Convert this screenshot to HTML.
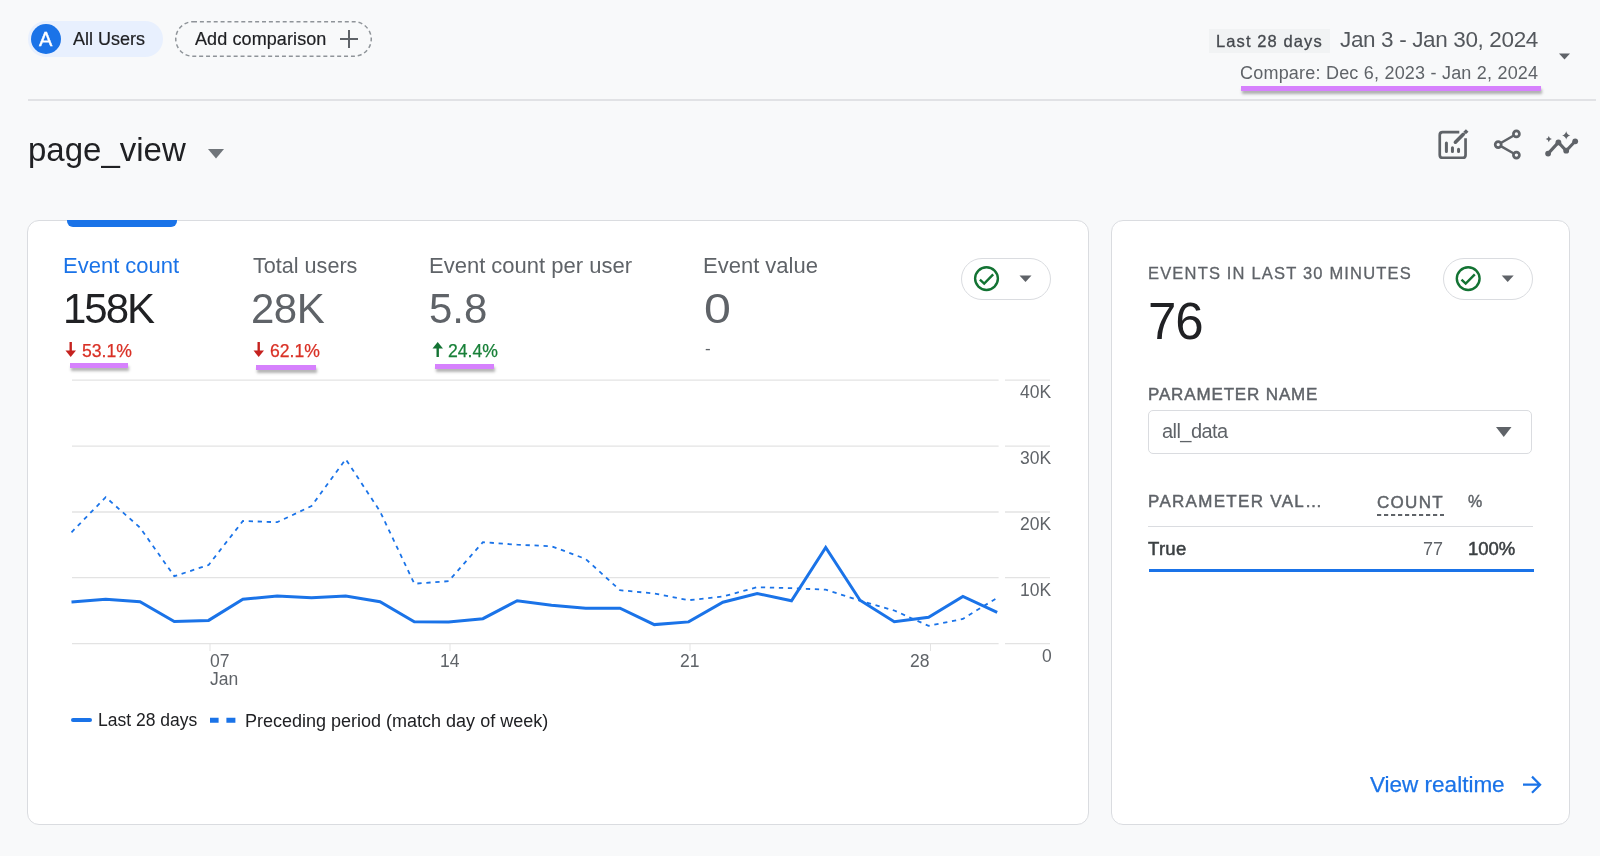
<!DOCTYPE html>
<html><head><meta charset="utf-8">
<style>
html,body{margin:0;padding:0;}
body{width:1600px;height:856px;background:#f8f9fa;position:relative;overflow:hidden;font-family:"Liberation Sans",sans-serif;color:#202124;}
.a{position:absolute;white-space:nowrap;line-height:1;will-change:transform;}
.card{position:absolute;background:#fff;border:1px solid #dadce0;border-radius:12px;box-sizing:border-box;}
.pu{position:absolute;background:#d681fd;height:5px;box-shadow:1px 3px 3px rgba(0,0,0,0.3);}
.g{color:#5f6368;}
</style></head><body>

<!-- top chips -->
<div style="position:absolute;left:28px;top:21px;width:135px;height:36px;border-radius:18px;background:#e8f0fe;"></div>
<div style="position:absolute;left:31px;top:24px;width:30px;height:30px;border-radius:15px;background:#1a73e8;"></div>
<div class="a" style="left:38.5px;top:28.5px;font-size:20px;-webkit-text-stroke:0.4px #fff;color:#fff;">A</div>
<div class="a" style="left:73px;top:29.8px;font-size:18px;-webkit-text-stroke:0.2px #202124;color:#202124;">All Users</div>

<svg style="position:absolute;left:174px;top:20px" width="200" height="40"><rect x="1.75" y="1.75" width="195.5" height="34.5" rx="17.25" fill="none" stroke="#8f9499" stroke-width="1.5" stroke-dasharray="4 2.9"/></svg>
<div class="a" style="left:195px;top:30px;font-size:18px;letter-spacing:0.1px;-webkit-text-stroke:0.2px #202124;color:#202124;">Add comparison</div>
<div style="position:absolute;left:340px;top:38px;width:18px;height:2px;background:#5f6368;"></div>
<div style="position:absolute;left:348px;top:30px;width:2px;height:18px;background:#5f6368;"></div>

<!-- date range -->
<div style="position:absolute;left:1209px;top:29px;width:121px;height:24px;background:#f1f3f4;"></div>
<div class="a" style="left:1216px;top:32.5px;font-size:16.5px;letter-spacing:1.1px;-webkit-text-stroke:0.3px #45494e;color:#45494e;">Last 28 days</div>
<div class="a" style="left:1339.5px;top:29.2px;font-size:22.5px;letter-spacing:-0.36px;color:#54585d;">Jan 3 - Jan 30, 2024</div>
<div class="a" style="left:1240px;top:63.5px;font-size:18px;letter-spacing:0.21px;color:#5f6368;">Compare: Dec 6, 2023 - Jan 2, 2024</div>
<div class="pu" style="left:1241px;top:86px;width:300px;height:4.5px;"></div>
<svg style="position:absolute;left:1559px;top:53px" width="12" height="7"><path d="M0 0.5 L11 0.5 L5.5 6.5Z" fill="#5f6368"/></svg>
<div style="position:absolute;left:28px;top:99px;width:1568px;height:2px;background:#e1e2e5;"></div>

<!-- title -->
<div class="a" style="left:28px;top:133px;font-size:33px;color:#202124;">page_view</div>
<svg style="position:absolute;left:208px;top:149px" width="17" height="10"><path d="M0 0 L16 0 L8 9.5Z" fill="#70757a"/></svg>

<!-- icons -->
<svg style="position:absolute;left:1430px;top:120px" width="160" height="50" fill="none" stroke="#5f6368">
  <path d="M29.3 12.15 H12.6 Q9.75 12.15 9.75 15 V34.9 Q9.75 37.75 12.6 37.75 H32.7 Q35.55 37.75 35.55 34.9 V18.2" stroke-width="2.7"/>
  <path d="M16.4 23.1 V31.6 M22.45 27.7 V31.6 M28.55 29.3 V31.6" stroke-width="3" stroke-linecap="round"/>
  <path d="M25.4 22.2 L33.3 14.3" stroke-width="3.6" stroke-linecap="round"/>
  <path d="M34.6 13 L37.2 10.4" stroke-width="3.6"/>
  <circle cx="86.4" cy="13.9" r="3" stroke-width="2.7"/>
  <circle cx="68.2" cy="24.6" r="3" stroke-width="2.7"/>
  <circle cx="86.4" cy="35.1" r="3" stroke-width="2.7"/>
  <path d="M70.8 23 L83.8 15.5 M70.8 26.2 L83.8 33.5" stroke-width="2.5"/>
  <path d="M118.1 33.6 L128.4 22.4 L136.2 30.7 L145.2 21.3" stroke-width="3.1"/>
  <g fill="#5f6368" stroke="none">
    <circle cx="118.1" cy="33.6" r="2.9"/><circle cx="128.4" cy="22.4" r="2.9"/><circle cx="136.2" cy="30.7" r="2.9"/><circle cx="145.2" cy="21.3" r="2.9"/>
    <path d="M136.2 11.2 Q136.9 14.7 140.3 15.4 Q136.9 16.1 136.2 19.6 Q135.5 16.1 132.1 15.4 Q135.5 14.7 136.2 11.2Z"/>
    <path d="M118.8 16 Q119.3 18.6 121.9 19.1 Q119.3 19.6 118.8 22.2 Q118.3 19.6 115.7 19.1 Q118.3 18.6 118.8 16Z"/>
  </g>
</svg>

<!-- left card -->
<div class="card" style="left:27px;top:220px;width:1062px;height:605px;"></div>
<div style="position:absolute;left:67px;top:220px;width:110px;height:7px;background:#1a73e8;border-radius:0 0 6px 6px;"></div>

<div class="a" style="left:63px;top:254.5px;font-size:22px;color:#1a73e8;">Event count</div>
<div class="a" style="left:253px;top:254.8px;font-size:21.6px;color:#5f6368;">Total users</div>
<div class="a" style="left:429px;top:254.5px;font-size:22px;color:#5f6368;">Event count per user</div>
<div class="a" style="left:703px;top:254.5px;font-size:22px;color:#5f6368;">Event value</div>

<div class="a" style="left:63px;top:287.5px;font-size:42px;letter-spacing:-2px;color:#202124;">158K</div>
<div class="a" style="left:251px;top:287.5px;font-size:42px;letter-spacing:-0.5px;color:#5f6368;">28K</div>
<div class="a" style="left:429px;top:287.5px;font-size:42px;color:#5f6368;">5.8</div>
<div class="a" style="left:704px;top:287.5px;font-size:42px;color:#5f6368;transform:scaleX(1.15);transform-origin:0 0;">0</div>
<div class="a" style="left:704.5px;top:339.5px;font-size:17px;color:#5f6368;">-</div>

<div class="a" style="left:82px;top:342.8px;font-size:17.6px;letter-spacing:0px;-webkit-text-stroke:0.25px #d93025;color:#d93025;">53.1%</div>
<div class="a" style="left:270px;top:342.8px;font-size:17.6px;letter-spacing:0px;-webkit-text-stroke:0.25px #d93025;color:#d93025;">62.1%</div>
<div class="a" style="left:448px;top:342.8px;font-size:17.6px;letter-spacing:0px;-webkit-text-stroke:0.25px #188038;color:#188038;">24.4%</div>
<svg style="position:absolute;left:0;top:0" width="600" height="400">
  <path d="M70.7 342 V354" stroke="#c5221f" stroke-width="2.4"/><path d="M65.5 350.5 L70.7 357 L76 350.5Z" fill="#c5221f"/>
  <path d="M258.7 342 V354" stroke="#c5221f" stroke-width="2.4"/><path d="M253.5 350.5 L258.7 357 L264 350.5Z" fill="#c5221f"/>
  <path d="M437.7 345 V357" stroke="#137333" stroke-width="2.4"/><path d="M432.5 348.5 L437.7 342 L443 348.5Z" fill="#137333"/>
</svg>
<div class="pu" style="left:70px;top:363px;width:58px;"></div>
<div class="pu" style="left:256px;top:364.5px;width:60px;"></div>
<div class="pu" style="left:435px;top:364px;width:59px;"></div>

<!-- status chip left -->
<div style="position:absolute;left:961px;top:257.5px;width:90px;height:42px;border-radius:21px;border:1px solid #dadce0;box-sizing:border-box;"></div>
<svg style="position:absolute;left:961px;top:257px" width="90" height="43">
  <circle cx="25.5" cy="21.6" r="11.4" fill="none" stroke="#137333" stroke-width="2.4"/>
  <path d="M18.9 22.6 L23.2 26.6 L32.2 17.3" fill="none" stroke="#137333" stroke-width="2.4"/>
  <path d="M58.5 18.5 L70.5 18.5 L64.5 25Z" fill="#5f6368"/>
</svg>

<!-- chart -->
<svg style="position:absolute;left:0;top:0" width="1600" height="856">
  <g stroke="#e3e3e3" stroke-width="1.3">
    <path d="M72 380.2 H998.6 M1005 380.2 H1050"/>
    <path d="M72 446.1 H998.6 M1005 446.1 H1050"/>
    <path d="M72 512 H998.6 M1005 512 H1050"/>
    <path d="M72 577.7 H998.6 M1005 577.7 H1050"/>
    <path d="M72 643.7 H998.6 M1005 643.7 H1050"/>
    <path d="M210 644 V651 M450 644 V651 M690 644 V651 M930.5 644 V651" stroke-width="1"/>
  </g>
  <polyline fill="none" stroke="#1a73e8" stroke-width="1.8" stroke-dasharray="4.3 4.7" points="71.5,532.3 105.7,497.2 140.0,527.6 174.3,576.2 208.6,565.0 242.9,521.0 277.2,522.2 311.5,506.1 345.7,459.2 380.0,511.3 414.3,583.7 448.6,581.2 482.9,542.2 517.2,544.7 551.5,546.2 585.7,559.0 620.0,590.2 654.3,593.5 688.6,600.2 722.9,596.5 757.2,587.2 791.5,588.2 825.7,589.7 860.0,600.6 894.3,610.5 928.6,625.9 962.9,618.9 997.2,597.8"/>
  <polyline fill="none" stroke="#1a73e8" stroke-width="3" stroke-linejoin="miter" points="71.5,601.9 105.7,599.3 140.0,601.7 174.3,621.5 208.6,620.4 242.9,599.3 277.2,596.1 311.5,597.7 345.7,596.1 380.0,601.7 414.3,621.8 448.6,621.9 482.9,618.7 517.2,600.7 551.5,605.2 585.7,608.2 620.0,608.2 654.3,624.6 688.6,621.9 722.9,602.2 757.2,593.5 791.5,600.7 825.7,547.5 860.0,600.2 894.3,621.7 928.6,617.2 962.9,596.4 997.2,612.3"/>
  <path d="M73 720 H90" stroke="#1a73e8" stroke-width="4" stroke-linecap="round"/>
  <path d="M210 720.2 H218.6 M226.4 720.2 H235.4" stroke="#1a73e8" stroke-width="5"/>
</svg>
<div class="a g" style="right:548.5px;top:384px;font-size:17.5px;">40K</div>
<div class="a g" style="right:548.5px;top:450px;font-size:17.5px;">30K</div>
<div class="a g" style="right:548.5px;top:516px;font-size:17.5px;">20K</div>
<div class="a g" style="right:548.5px;top:582px;font-size:17.5px;">10K</div>
<div class="a g" style="right:548.5px;top:648px;font-size:17.5px;">0</div>
<div class="a g" style="left:210px;top:653px;font-size:17.5px;">07</div>
<div class="a g" style="left:210px;top:671px;font-size:17.5px;">Jan</div>
<div class="a g" style="left:440px;top:653px;font-size:17.5px;">14</div>
<div class="a g" style="left:680px;top:653px;font-size:17.5px;">21</div>
<div class="a g" style="left:910px;top:653px;font-size:17.5px;">28</div>
<div class="a" style="left:97.5px;top:712px;font-size:17.5px;color:#202124;">Last 28 days</div>
<div class="a" style="left:245px;top:711.5px;font-size:18px;color:#202124;">Preceding period (match day of week)</div>

<!-- right card -->
<div class="card" style="left:1110.5px;top:220px;width:459.5px;height:605px;"></div>
<div class="a g" style="left:1148px;top:265px;font-size:16.5px;letter-spacing:1.18px;-webkit-text-stroke:0.3px #5f6368;">EVENTS IN LAST 30 MINUTES</div>
<div class="a" style="left:1148px;top:296px;font-size:51px;letter-spacing:-1px;color:#202124;">76</div>
<div style="position:absolute;left:1443px;top:257.5px;width:90px;height:42px;border-radius:21px;border:1px solid #dadce0;box-sizing:border-box;"></div>
<svg style="position:absolute;left:1443px;top:257px" width="90" height="43">
  <circle cx="25.2" cy="21.6" r="11.4" fill="none" stroke="#137333" stroke-width="2.4"/>
  <path d="M18.5 22.6 L22.7 26.6 L31.8 17.3" fill="none" stroke="#137333" stroke-width="2.4"/>
  <path d="M58.7 18.5 L70.7 18.5 L64.7 25Z" fill="#5f6368"/>
</svg>
<div class="a g" style="left:1148px;top:386px;font-size:17px;letter-spacing:0.85px;-webkit-text-stroke:0.45px #5f6368;">PARAMETER NAME</div>
<div style="position:absolute;left:1148px;top:410px;width:384px;height:44px;border:1px solid #dadce0;border-radius:5px;box-sizing:border-box;"></div>
<div class="a g" style="left:1162px;top:420.6px;font-size:20px;letter-spacing:-0.55px;">all_data</div>
<svg style="position:absolute;left:1495px;top:426px" width="18" height="12"><path d="M1 1 L16.5 1 L8.75 11Z" fill="#5f6368"/></svg>
<div class="a g" style="left:1148px;top:493px;font-size:17px;letter-spacing:1.3px;-webkit-text-stroke:0.45px #5f6368;">PARAMETER VAL…</div>
<div class="a g" style="left:1377px;top:493.5px;font-size:17px;letter-spacing:1.3px;-webkit-text-stroke:0.45px #5f6368;">COUNT</div>
<svg style="position:absolute;left:1377px;top:513px" width="68" height="4"><path d="M0 2 H67" stroke="#5f6368" stroke-width="2" stroke-dasharray="4.2 2.8"/></svg>
<div class="a g" style="left:1468px;top:493.5px;font-size:16px;-webkit-text-stroke:0.45px #5f6368;">%</div>
<div style="position:absolute;left:1148px;top:526px;width:385px;height:1px;background:#dadce0;"></div>
<div class="a" style="left:1148px;top:539.5px;font-size:18.5px;letter-spacing:0.3px;-webkit-text-stroke:0.5px #3c4043;color:#3c4043;">True</div>
<div class="a g" style="left:1423px;top:540px;font-size:18px;">77</div>
<div class="a" style="left:1468px;top:540px;font-size:18.5px;-webkit-text-stroke:0.5px #3c4043;color:#3c4043;">100%</div>
<div style="position:absolute;left:1149px;top:569px;width:385px;height:3px;background:#1a73e8;"></div>
<div class="a" style="left:1370px;top:774px;font-size:22.5px;-webkit-text-stroke:0.25px #1a73e8;color:#1a73e8;">View realtime</div>
<svg style="position:absolute;left:1520px;top:773px" width="24" height="24"><path d="M3 11.7 H19.5 M12 3.6 L20.1 11.7 L12 19.8" fill="none" stroke="#1a73e8" stroke-width="2.2"/></svg>

</body></html>
